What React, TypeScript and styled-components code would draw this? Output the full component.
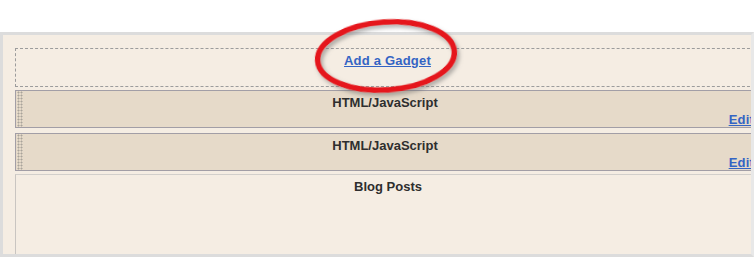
import React from 'react';
import styled, { createGlobalStyle } from 'styled-components';

const GlobalStyle = createGlobalStyle`
  body {
    margin: 0;
    background: #ffffff;
    overflow: hidden;
    font-family: 'Liberation Sans', Arial, sans-serif;
  }
`;

const Page = styled.div`
  position: relative;
  padding-top: 32px;
`;

const Panel = styled.div`
  box-sizing: border-box;
  width: 754px;
  height: 225px;
  border: 3px solid #dcdcdc;
  border-right-color: #e8e8e8;
  background: #f5ede3;
  padding: 13px 0 0 12px;
  overflow: hidden;
`;

const Column = styled.div`
  width: 745px;
  height: 100%;
  display: flex;
  flex-direction: column;
`;

const Link = styled.a`
  color: #3464c4;
  font-size: 13px;
  font-weight: bold;
  line-height: 15px;
  text-decoration: underline;
  letter-spacing: 0.2px;
  cursor: pointer;
`;

const AddBox = styled.div`
  box-sizing: border-box;
  height: 39px;
  border: 1px dashed #9c9c9c;
  text-align: center;
  padding-top: 2px;
`;

const Widget = styled.div<{ $gap: number }>`
  position: relative;
  box-sizing: border-box;
  height: 38px;
  margin-top: ${(p) => p.$gap}px;
  border: 1px solid #a29ea6;
  background: #e6dac9;
  padding: 4px 5px 0 0;

  &::before {
    content: '';
    position: absolute;
    left: 1px;
    top: 0;
    bottom: 0;
    width: 6px;
    background: radial-gradient(circle, #a9a49b 0.8px, transparent 1.2px) 0 0 / 3px 3px;
  }
`;

const Title = styled.div`
  text-align: center;
  color: #2e2e2e;
  font-size: 13px;
  font-weight: bold;
  line-height: 15px;
`;

const EditRow = styled.div`
  text-align: right;
`;

const PostsBox = styled.div`
  flex: 1;
  margin-top: 3px;
  border-left: 1px solid #c9c5c1;
  border-top: 1px solid #d2cfcb;
  padding-top: 4px;
`;

const Highlight = styled.svg`
  position: absolute;
  left: 305px;
  top: 8px;
  pointer-events: none;
`;

const widgets = ['HTML/JavaScript', 'HTML/JavaScript'];

export default function App() {
  return (
    <>
      <GlobalStyle />
      <Page>
        <Panel>
          <Column>
            <AddBox>
              <Link>Add a Gadget</Link>
            </AddBox>
            {widgets.map((name, i) => (
              <Widget key={i} $gap={i === 0 ? 3 : 5}>
                <Title>{name}</Title>
                <EditRow>
                  <Link>Edit</Link>
                </EditRow>
              </Widget>
            ))}
            <PostsBox>
              <Title>Blog Posts</Title>
            </PostsBox>
          </Column>
        </Panel>
        <Highlight width="170" height="100" viewBox="0 0 170 100">
          <defs>
            <filter id="shade" x="-20%" y="-20%" width="140%" height="150%">
              <feDropShadow dx="2" dy="3" stdDeviation="2" floodColor="#6b6b6b" floodOpacity="0.55" />
            </filter>
          </defs>
          <ellipse
            cx="81"
            cy="48"
            rx="68.5"
            ry="34"
            fill="none"
            stroke="#e5121a"
            strokeWidth="5.5"
            transform="rotate(-4 81 48)"
            filter="url(#shade)"
          />
        </Highlight>
      </Page>
    </>
  );
}
